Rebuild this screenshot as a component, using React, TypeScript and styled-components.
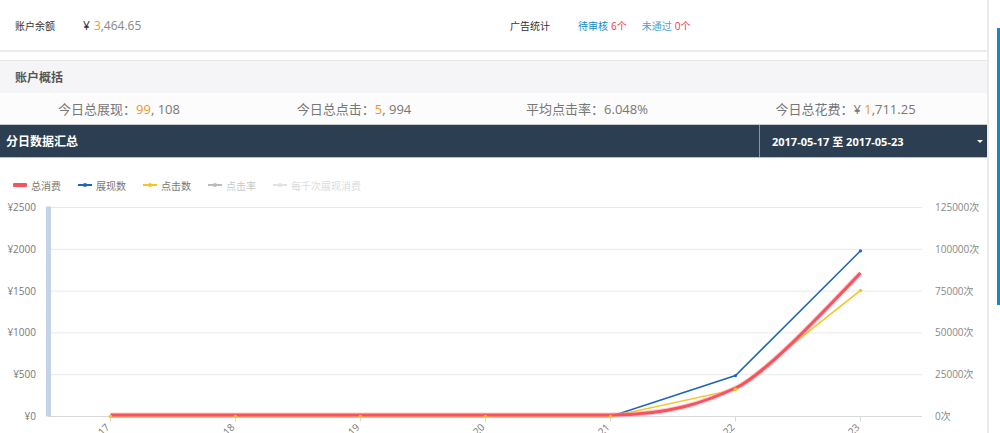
import React from 'react';
import styled, { createGlobalStyle } from 'styled-components';

const GlobalStyle = createGlobalStyle`
  html, body {
    margin: 0;
    padding: 0;
    background: #fff;
    overflow: hidden;
  }
  body {
    font-family: "Open Sans", "Noto Sans CJK SC", sans-serif;
  }
`;

const Page = styled.div`
  display: flex;
  align-items: flex-start;
  width: 1000px;
  height: 433px;
  overflow: hidden;
`;

const Main = styled.div`
  width: 987px;
  flex-shrink: 0;
  border-right: 2px solid #ebebeb;
`;

const Gutter = styled.div`
  flex: 1;
  display: flex;
  justify-content: flex-end;
  padding-top: 28px;
`;

const Thumb = styled.div`
  width: 3px;
  height: 277px;
  background: #118bc1;
`;

const TopPanel = styled.div`
  height: 50px;
  display: grid;
  grid-template-columns: 495px 1fr;
  align-items: center;
  border-bottom: 2px solid #ebebeb;
`;

const InfoGroup = styled.div`
  display: flex;
  align-items: center;
  padding-left: 15px;
`;

const InfoLabel = styled.span`
  width: 68px;
  font-size: 10px;
  color: #333;
`;

const Money = styled.span`
  font-size: 12px;
  color: #888;
`;

const Currency = styled.span`
  color: #333;
  margin-right: 4px;
`;

const Accent = styled.span`
  color: #f7941d;
`;

const AdLink = styled.span<{ $shade: string }>`
  font-size: 10px;
  color: ${(p) => p.$shade};
  margin-right: 15px;
`;

const Count = styled.span`
  color: #ef343c;
  margin-left: 3px;
`;

const Overview = styled.section`
  margin-top: 8px;
  border-top: 1px solid #e6e6e6;
`;

const OverviewHeader = styled.div`
  height: 32px;
  display: flex;
  align-items: center;
  padding-left: 15px;
  background: #f5f5f7;
  font-size: 12px;
  font-weight: 600;
  color: #555;
`;

const StatsRow = styled.div`
  height: 31px;
  display: grid;
  grid-template-columns: 238px 232px 234px 1fr;
  align-items: center;
  background: #fcfcfc;
  border-bottom: 1px solid #c9c9c9;
`;

const Stat = styled.div`
  text-align: center;
  font-size: 13px;
  color: #777;
`;

const SectionBar = styled.div`
  height: 32px;
  display: flex;
  background: #2c3e52;
  border-bottom: 1px solid #b7bec6;
`;

const SectionTitle = styled.div`
  flex: 1;
  display: flex;
  align-items: center;
  padding-left: 6px;
  color: #fff;
  font-size: 12px;
  font-weight: 700;
`;

const DateSelect = styled.div`
  width: 228px;
  display: flex;
  align-items: center;
  justify-content: space-between;
  padding: 0 4px 0 12px;
  box-sizing: border-box;
  border-left: 1px solid #8a96a3;
  color: #fff;
  font-size: 11px;
  font-weight: 700;
`;

const Caret = styled.span`
  width: 0;
  height: 0;
  border-left: 3px solid transparent;
  border-right: 3px solid transparent;
  border-top: 3px solid #fff;
`;

const ChartArea = styled.div`
  display: flex;
  flex-direction: column;
`;

const Legend = styled.div`
  display: flex;
  align-items: center;
  gap: 17px;
  height: 14px;
  margin-top: 20px;
  padding-left: 13px;
`;

const LegendItem = styled.div<{ $tone: string }>`
  display: flex;
  align-items: center;
  gap: 4px;
  font-size: 10px;
  color: ${(p) => p.$tone};
`;

const ChartSvg = styled.svg`
  display: block;
  margin-top: 3px;
  flex-shrink: 0;
`;

const legend = [
  { name: '总消费', color: '#f9525f', tone: '#777', bar: true },
  { name: '展现数', color: '#1d64c2', tone: '#777' },
  { name: '点击数', color: '#f7c325', tone: '#777' },
  { name: '点击率', color: '#bbb', tone: '#c8c8c8' },
  { name: '每千次展现消费', color: '#e2e2e2', tone: '#dcdcdc' },
];

const days = ['05-17', '05-18', '05-19', '05-20', '05-21', '05-22', '05-23'];
const left = 48;
const right = 922;
const top = 207.5;
const bottom = 416.5;
const step = (bottom - top) / 5;
const xs = days.map((_, i) => left + 62.5 + 125 * i);

const yRight = (v: number) => bottom - (v / 125000) * (bottom - top);

const views = [0, 0, 0, 0, 0, 24500, 99108];
const clicks = [0, 0, 0, 0, 0, 16200, 75400];

const leftLabels = ['¥2500', '¥2000', '¥1500', '¥1000', '¥500', '¥0'];
const rightLabels = ['125000次', '100000次', '75000次', '50000次', '25000次', '0次'];

function LegendIcon({ color, bar }: { color: string; bar?: boolean }) {
  return (
    <svg width="14" height="6" viewBox="0 0 14 6">
      {bar ? (
        <rect x="0" y="1" width="14" height="4" rx="1" fill={color} />
      ) : (
        <>
          <rect x="0" y="2" width="14" height="2" fill={color} />
          <circle cx="7" cy="3" r="2" fill={color} />
        </>
      )}
    </svg>
  );
}

function Chart() {
  const line = (vals: number[]) =>
    vals.map((v, i) => `${i === 0 ? 'M' : 'L'}${xs[i]} ${yRight(v)}`).join(' ');
  const spend = `M${xs[0]} 415 L${xs[4]} 415 C670 415 705 402 ${xs[5]} 388 C765 375 825 310 ${xs[6]} 273`;

  return (
    <ChartSvg width="987" height="260" viewBox="0 195 987 260">
      {leftLabels.map((label, k) => (
        <g key={label}>
          <line x1={left} x2={right} y1={top + step * k} y2={top + step * k} stroke="#e9e9e9" />
          <text x="36" y={top + step * k + 3.5} textAnchor="end" fontSize="10" fill="#777">
            {label}
          </text>
          <text x="935" y={top + step * k + 3.5} fontSize="10" fill="#888">
            {rightLabels[k]}
          </text>
        </g>
      ))}
      <line x1={left} x2={right} y1={bottom} y2={bottom} stroke="#d9d9d9" />
      <rect x="46" y={top - 1} width="5" height={bottom - top + 1} fill="#c4d4e6" />
      {xs.map((x, i) => (
        <g key={days[i]}>
          <line x1={x} x2={x} y1={bottom} y2={bottom + 5} stroke="#d9d9d9" />
          <text
            x={x - 2}
            y={426}
            textAnchor="end"
            dominantBaseline="middle"
            fontSize="10"
            fill="#777"
            transform={`rotate(-45 ${x - 2} 426)`}
          >
            {days[i]}
          </text>
        </g>
      ))}
      <path d={line(views)} fill="none" stroke="#1d64c2" strokeWidth="1.5" />
      <path d={line(clicks)} fill="none" stroke="#f7c325" strokeWidth="1.5" />
      <path d={spend} fill="none" stroke="#ff9ca4" strokeWidth="5" opacity="0.5" />
      <path d={spend} fill="none" stroke="#f9525f" strokeWidth="3" />
      {xs.map((x, i) => (
        <g key={`dot-${i}`}>
          {i > 4 && <circle cx={x} cy={yRight(views[i])} r="1.6" fill="#1d64c2" />}
          <circle cx={x} cy={i > 4 ? yRight(clicks[i]) : bottom} r="1.8" fill="#f7c325" />
        </g>
      ))}
    </ChartSvg>
  );
}

export default function App() {
  return (
    <>
      <GlobalStyle />
      <Page>
        <Main>
          <TopPanel>
            <InfoGroup>
              <InfoLabel>账户余额</InfoLabel>
              <Money>
                <Currency>¥</Currency>
                <Accent>3</Accent>,464.65
              </Money>
            </InfoGroup>
            <InfoGroup>
              <InfoLabel>广告统计</InfoLabel>
              <AdLink $shade="#168cc4">
                待审核<Count>6个</Count>
              </AdLink>
              <AdLink $shade="#4b9fd2">
                未通过<Count>0个</Count>
              </AdLink>
            </InfoGroup>
          </TopPanel>

          <Overview>
            <OverviewHeader>账户概括</OverviewHeader>
            <StatsRow>
              <Stat>
                今日总展现：<Accent>99</Accent>, 108
              </Stat>
              <Stat>
                今日总点击：<Accent>5</Accent>, 994
              </Stat>
              <Stat>平均点击率：6.048%</Stat>
              <Stat>
                今日总花费：¥ <Accent>1</Accent>,711.25
              </Stat>
            </StatsRow>
          </Overview>

          <SectionBar>
            <SectionTitle>分日数据汇总</SectionTitle>
            <DateSelect>
              2017-05-17 至 2017-05-23
              <Caret />
            </DateSelect>
          </SectionBar>

          <ChartArea>
            <Legend>
              {legend.map((item) => (
                <LegendItem key={item.name} $tone={item.tone}>
                  <LegendIcon color={item.color} bar={item.bar} />
                  {item.name}
                </LegendItem>
              ))}
            </Legend>
            <Chart />
          </ChartArea>
        </Main>
        <Gutter>
          <Thumb />
        </Gutter>
      </Page>
    </>
  );
}
